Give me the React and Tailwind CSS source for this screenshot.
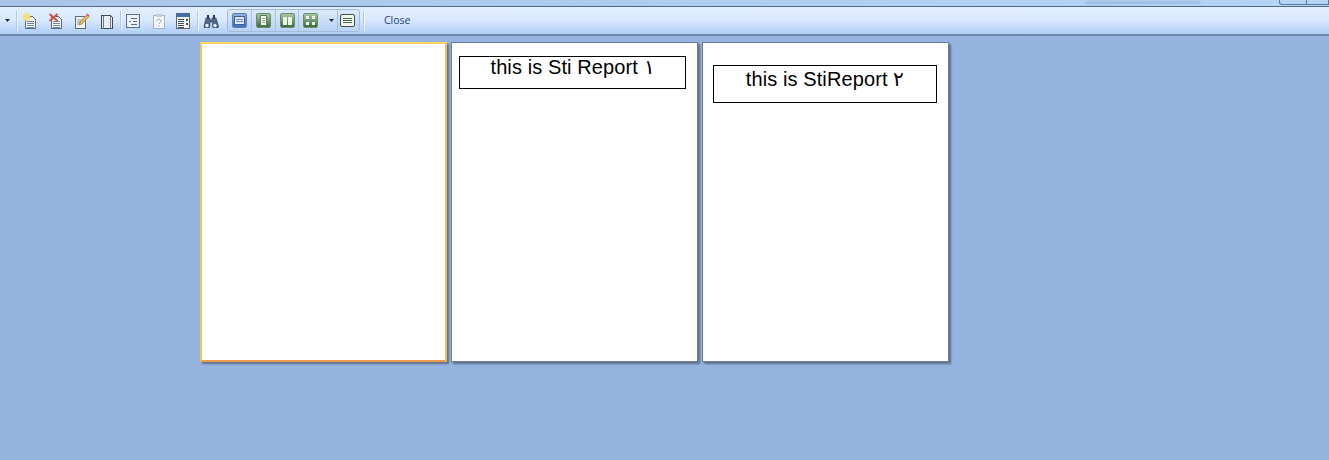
import React from "react";

const Sep = ({ className = "" }) => (
  <div className={"w-[2px] h-[20px] bg-[#f2f7ff] border-l border-[#b4c9e8] " + className} />
);

const GroupSep = ({ className = "" }) => <div className={"w-px h-full bg-[#a9c0e0] " + className} />;

const Arrow = ({ className = "" }) => (
  <svg width="5" height="3" viewBox="0 0 5 3" className={className}>
    <path d="M0 0h5L2.500 3z" fill="#15295a" />
  </svg>
);

const Doc = ({ children }) => (
  <svg width="16" height="16" viewBox="0 0 16 16" shapeRendering="crispEdges">
    <path d="M3.500 3.500h7l3 3v9h-10z" fill="#f4f6f8" stroke="#5c6b7c" />
    <path d="M5 8h7M5 10h7M5 12h7M5 14h7" stroke="#6d86a8" />
    {children}
  </svg>
);

const NewIcon = () => (
  <Doc>
    <circle cx="4.500" cy="4" r="3.600" fill="#f6e27e" stroke="#f9d65a" strokeDasharray="1.500 1" shapeRendering="auto" />
  </Doc>
);

const DeleteIcon = () => (
  <Doc>
    <path d="M1.500 1l8 7M9.500 1l-8 7" stroke="#d9503f" strokeWidth="2" shapeRendering="auto" />
  </Doc>
);

const EditIcon = () => (
  <svg width="16" height="16" viewBox="0 0 16 16">
    <path d="M1.500 3.500h10v12h-10z" fill="#f2f3ee" stroke="#5c6b7c" shapeRendering="crispEdges" />
    <path d="M3 7h5M3 9h4M3 11h3" stroke="#8c9db4" />
    <path d="M5 12l1-3 7-7.500 2 2L8 11z" fill="#e2bc55" stroke="#8a6a2c" strokeWidth=".6" />
    <path d="M12.500 1.500l2 2 1-1.200-2-1.800z" fill="#d9534f" />
  </svg>
);

const CopyIcon = () => (
  <svg width="14" height="16" viewBox="0 0 14 16" shapeRendering="crispEdges">
    <path d="M1.500 2.500h9l2 2v11h-11z" fill="#e8edf2" stroke="#3f4a58" />
    <path d="M3.500 2.500v13M10.500 2.500v13" stroke="#6b7889" />
  </svg>
);

const ListIcon = () => (
  <svg width="14" height="14" viewBox="0 0 14 14" shapeRendering="crispEdges">
    <rect x=".5" y=".5" width="13" height="13" fill="#eef2f8" stroke="#5f6f83" />
    <path d="M5 4h6M3 7h2M7 7h4M5 10h6" stroke="#4f6f9c" />
  </svg>
);

const HelpIcon = () => (
  <svg width="14" height="16" viewBox="0 0 14 16">
    <rect x="1.500" y="2.500" width="11" height="13" fill="#f1f4f8" stroke="#aab4c0" shapeRendering="crispEdges" />
    <rect x="4" y="1" width="6" height="3" fill="#c3ccd6" />
    <path d="M5 8c0-2.200 4-2.200 4 0 0 1.500-2 1.500-2 3M7 12.500v1.200" fill="none" stroke="#9aa5b3" />
  </svg>
);

const TableIcon = () => (
  <svg width="14" height="16" viewBox="0 0 14 16" shapeRendering="crispEdges">
    <rect x=".5" y=".5" width="13" height="15" fill="#f4f6f9" stroke="#56667a" />
    <rect x="1" y="1" width="12" height="3" fill="#3f6fb0" />
    <path d="M2 6h6M2 8h6M2 10h6M2 12h6M2 14h6" stroke="#44505f" />
    <path d="M10 6h2v2h-2zM10 10h2v2h-2z" fill="#44505f" />
  </svg>
);

const BinocularsIcon = () => (
  <svg width="16" height="14" viewBox="0 0 16 14">
    <path d="M4 1h2v4H4zM10 1h2v4h-2z" fill="#26364c" />
    <path d="M3 4h4v2h2V4h4l2.500 8a2 2 0 0 1-6 0V8H7v4a2 2 0 0 1-6 0z" fill="#4f6788" stroke="#1d2a3d" strokeWidth=".5" />
    <circle cx="4" cy="11.500" r="1.700" fill="#e6edf6" />
    <circle cx="12" cy="11.500" r="1.700" fill="#e6edf6" />
  </svg>
);

const ViewBtn = ({ blue, children }) => (
  <div className={"w-[15px] h-[15px] rounded-[2px] border flex items-center justify-center " + (blue ? "bg-gradient-to-b from-[#8db1e6] to-[#3f71bd] border-[#5a7fb5]" : "bg-gradient-to-b from-[#a6c8a6] to-[#3d6a3d] border-[#6c8c6c]")}>
    {children}
  </div>
);

const Page = ({ selected, children }) => (
  <div className={"w-[247px] h-[320px] bg-white shadow-[2px_2px_2px_#5f6f8a] " + (selected ? "border-2 border-t-[#fbd65c] border-x-[#f6c25a] border-b-[#ec9c4c]" : "border border-[#6d7d94]")}>
    {children}
  </div>
);

const ReportBox = ({ className, children }) => (
  <div className={"border border-black text-center text-[20px] leading-[20px] tracking-[0.1px] text-black whitespace-nowrap font-['Liberation_Sans',sans-serif] " + className}>
    {children}
  </div>
);

export default function App() {
  return (
    <div className="w-[1329px] h-[460px] overflow-hidden bg-[#95b4df] font-['Liberation_Sans',sans-serif]">
      {/* title strip */}
      <div className="h-[7px] bg-gradient-to-r from-[#a9c5ea] to-[#b4d4f8] border-b border-[#4f6a88] flex justify-end overflow-hidden">
        <div className="mr-[79px] mt-[1px] w-[115px] h-[3px] bg-[#9fbde0] blur-[1px]" />
        <div className="w-[28px] h-[5px] border-x border-b border-[#5f7a98] rounded-bl-[3px]" />
        <div className="w-[22px] h-[5px] border-r border-b border-[#5f7a98]" />
      </div>

      {/* toolbar */}
      <div className="h-[29px] bg-gradient-to-b from-[#e3efff] via-[#d8e8ff] to-[#aecdf7] border-b-2 border-[#6f86a8] flex items-center">
        <Arrow className="ml-[5px]" />
        <Sep className="ml-[6px]" />
        <div className="ml-[4px] flex items-center gap-[10px]">
          <div className="w-[16px]"><NewIcon /></div>
          <div className="w-[16px]"><DeleteIcon /></div>
          <div className="w-[16px]"><EditIcon /></div>
          <div className="w-[14px]"><CopyIcon /></div>
        </div>
        <Sep className="ml-[6px]" />
        <div className="ml-[4px] flex items-center">
          <ListIcon />
          <div className="ml-[12px]"><HelpIcon /></div>
          <div className="ml-[10px]"><TableIcon /></div>
        </div>
        <Sep className="ml-[7px]" />
        <div className="ml-[4px]"><BinocularsIcon /></div>

        {/* view group */}
        <div className="ml-[8px] h-[23px] w-[133px] rounded-[3px] border border-[#a4bbdb] bg-gradient-to-b from-[#dce9fb] to-[#b9d2f5] flex items-center pl-[4px]">
          <ViewBtn blue>
            <div className="w-[11px] h-[9px] bg-[#dce8f9] border border-[#3d5f95] flex flex-col justify-center gap-px px-px">
              <div className="h-px bg-[#6d8fc4]" />
              <div className="h-px bg-[#6d8fc4]" />
            </div>
          </ViewBtn>
          <GroupSep className="mx-[4px]" />
          <ViewBtn>
            <div className="w-[7px] h-[11px] bg-[#f6f8f4] border border-[#5d7d5d] flex flex-col justify-center gap-px px-px">
              <div className="h-px bg-[#8ca08c]" />
              <div className="h-px bg-[#8ca08c]" />
              <div className="h-px bg-[#8ca08c]" />
            </div>
          </ViewBtn>
          <GroupSep className="mx-[4px]" />
          <ViewBtn>
            <div className="flex gap-px">
              <div className="w-[4px] h-[8px] bg-[#eef4ea]" />
              <div className="w-[4px] h-[8px] bg-[#eef4ea]" />
            </div>
          </ViewBtn>
          <GroupSep className="ml-[3px] mr-[4px]" />
          <ViewBtn>
            <div className="grid grid-cols-2 gap-[3px]">
              <div className="w-[3px] h-[3px] bg-[#eef4ea]" />
              <div className="w-[3px] h-[3px] bg-[#eef4ea]" />
              <div className="w-[3px] h-[3px] bg-[#eef4ea]" />
              <div className="w-[3px] h-[3px] bg-[#eef4ea]" />
            </div>
          </ViewBtn>
          <Arrow className="ml-[11px]" />
          <GroupSep className="ml-[3px] mr-[2px]" />
          <div className="w-[15px] h-[13px] rounded-[2px] border border-[#3f4f4a] bg-[#eef3ee] flex flex-col justify-center gap-px px-[2px]">
            <div className="h-px bg-[#4d6a52]" />
            <div className="h-px bg-[#4d6a52]" />
            <div className="h-px bg-[#4d6a52]" />
          </div>
        </div>
        <Sep className="ml-[3px]" />
        <span className="ml-[19px] text-[10.5px] text-[#15428b] font-['Open_Sans',sans-serif]">Close</span>
      </div>

      {/* pages */}
      <div className="flex gap-[4px] pl-[200px] pt-[6px]">
        <Page selected />
        <Page>
          <ReportBox className="ml-[7px] mt-[13px] w-[227px] h-[33px]">this is Sti Report ١</ReportBox>
        </Page>
        <Page>
          <ReportBox className="ml-[10px] mt-[22px] w-[224px] h-[38px] pt-[3px]">this is StiReport ٢</ReportBox>
        </Page>
      </div>
    </div>
  );
}
